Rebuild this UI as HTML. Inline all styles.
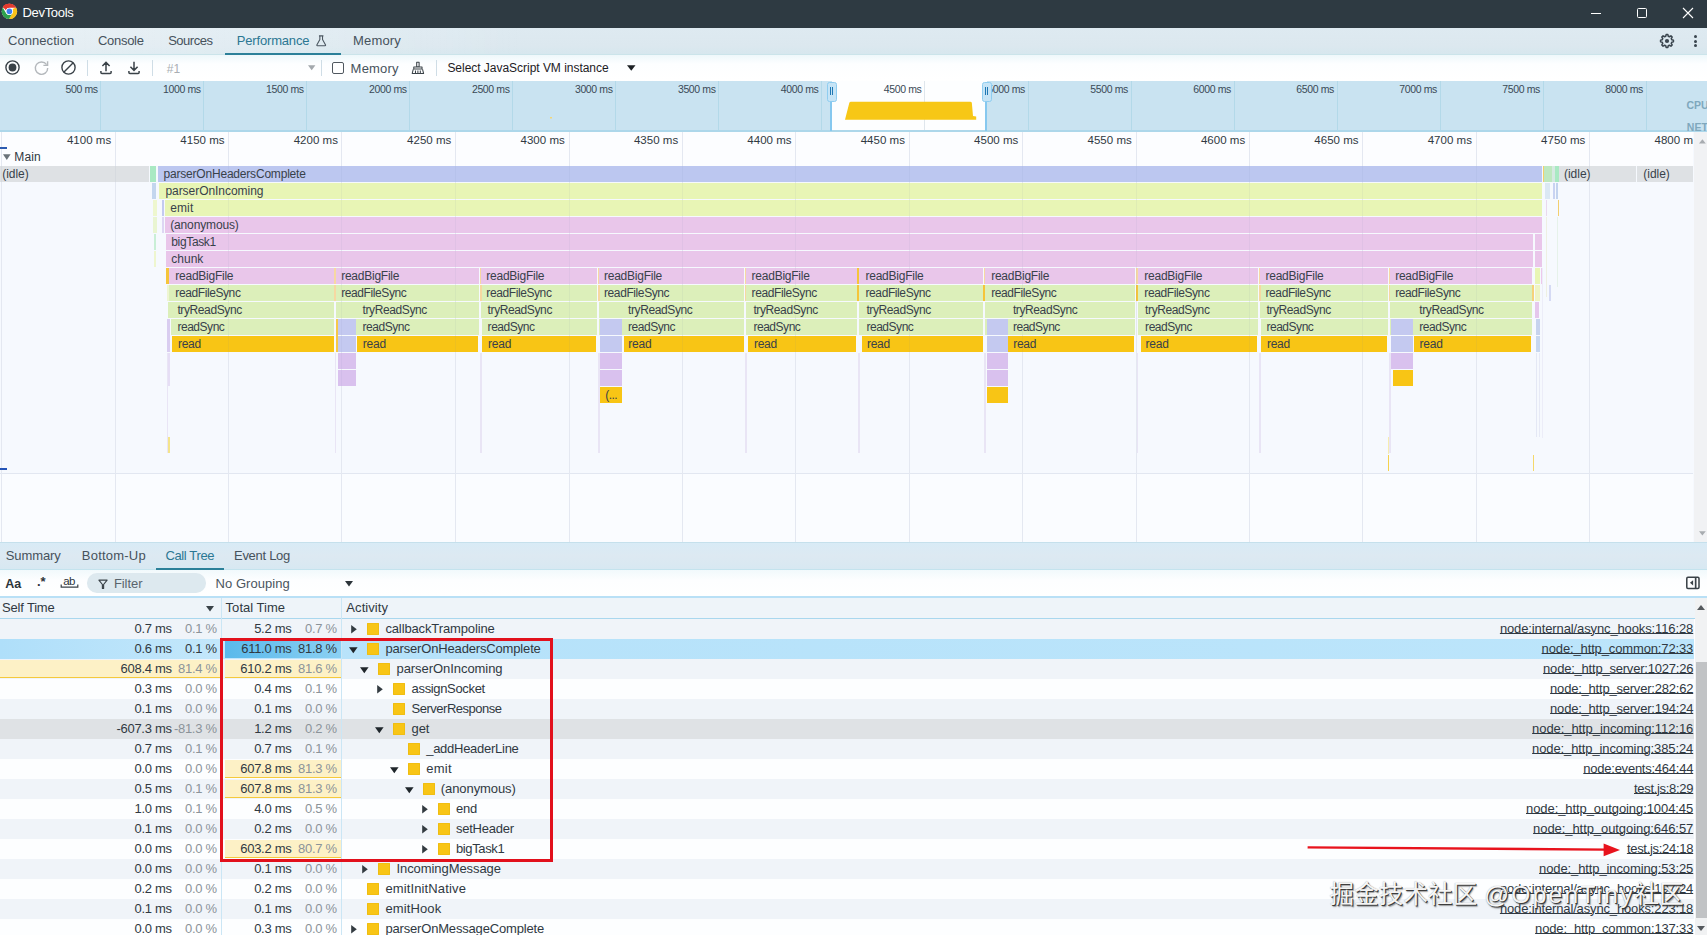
<!DOCTYPE html>
<html lang="en"><head><meta charset="utf-8"><title>DevTools</title>
<style>

html,body{margin:0;padding:0;}
body{width:1707px;height:935px;overflow:hidden;background:#f8fafe;font-family:"Liberation Sans","Noto Sans CJK SC",sans-serif;}
#app{position:relative;width:1707px;height:935px;overflow:hidden;}
.t{position:absolute;white-space:nowrap;line-height:16px;height:16px;}
.r{position:absolute;}
svg{position:absolute;overflow:visible;}
span.lk{position:absolute;white-space:nowrap;line-height:16px;height:16px;color:#303942;text-decoration:underline;text-decoration-thickness:1px;text-underline-offset:0.4px;}
</style></head>
<body>
<div id="app">
<div class="r" style="left:0.00px;top:0.00px;width:1707.00px;height:27.60px;background:#2e3a42;"></div>
<svg style="left:0.6px;top:3.2px" width="16.8" height="16.8" viewBox="0 0 48 48">
<circle cx="24" cy="24" r="22" fill="#fff"/>
<path d="M24 2a22 22 0 0 1 19.05 11H24a11 11 0 0 0-10.4 7.4L6 8.6A22 22 0 0 1 24 2z" fill="#e33b2e"/>
<path d="M43.05 13A22 22 0 0 1 23 46l9.5-16.5A11 11 0 0 0 33 17z" fill="#f9c11a" transform="rotate(0 24 24)"/>
<path d="M4.95 13A22 22 0 0 0 23 46l9.52-16.5a11 11 0 0 1-18.04 0z" fill="#2ea24c"/>
<path d="M24 2a22 22 0 0 1 19.05 11H24a11 11 0 0 0-9.53 5.5L4.95 13A22 22 0 0 1 24 2z" fill="#e33b2e"/>
<circle cx="24" cy="24" r="10" fill="#fff"/>
<circle cx="24" cy="24" r="8" fill="#3b7ff0"/>
</svg>
<div class="t" style="left:22.50px;top:4.60px;font-size:13px;color:#ffffff;letter-spacing:-0.321px;">DevTools</div>
<div class="r" style="left:1590.80px;top:13.00px;width:10.40px;height:1.00px;background:#ffffff;"></div>
<div class="r" style="left:1637px;top:8.2px;width:7.8px;height:7.8px;border:1px solid #fff;border-radius:1.5px;"></div>
<svg style="left:1683px;top:8.2px" width="10" height="10" viewBox="0 0 10 10"><path d="M0 0L10 10M10 0L0 10" stroke="#fff" stroke-width="1.1" fill="none"/></svg>
<div class="r" style="left:0;top:27.6px;width:1707px;height:27.4px;background:linear-gradient(90deg,rgba(255,255,255,0.32),rgba(255,255,255,0) 520px),linear-gradient(#deeaf1,#dce8ef 65%,#d6e7ee);"></div>
<div class="r" style="left:0.00px;top:54.20px;width:1707.00px;height:0.80px;background:#cbe4ea;"></div>
<div class="t" style="left:8.00px;top:32.50px;font-size:13px;color:#46525c;letter-spacing:0.053px;">Connection</div>
<div class="t" style="left:98.00px;top:32.50px;font-size:13px;color:#46525c;letter-spacing:-0.300px;">Console</div>
<div class="t" style="left:168.20px;top:32.50px;font-size:13px;color:#46525c;letter-spacing:-0.499px;">Sources</div>
<div class="t" style="left:236.80px;top:32.50px;font-size:13px;color:#2b7793;letter-spacing:-0.175px;">Performance</div>
<div class="t" style="left:353.00px;top:32.50px;font-size:13px;color:#46525c;letter-spacing:0.175px;">Memory</div>
<div class="r" style="left:225.00px;top:53.00px;width:116.00px;height:2.00px;background:#2c8099;"></div>
<svg style="left:314.8px;top:35.1px" width="12.4" height="11.6" viewBox="0 0 13 13"><path d="M4 1h5M5 1v4L1.6 11.2a.6.6 0 0 0 .5.8h8.8a.6.6 0 0 0 .5-.8L8 5V1" fill="none" stroke="#4a5660" stroke-width="1.2" stroke-linejoin="round"/></svg>
<svg style="left:1660px;top:33.7px" width="14" height="14" viewBox="0 0 14 14"><path d="M5.74 2.26 L6.13 0.56 L7.87 0.56 L8.26 2.26 L9.46 2.76 L10.94 1.83 L12.17 3.06 L11.24 4.54 L11.74 5.74 L13.44 6.13 L13.44 7.87 L11.74 8.26 L11.24 9.46 L12.17 10.94 L10.94 12.17 L9.46 11.24 L8.26 11.74 L7.87 13.44 L6.13 13.44 L5.74 11.74 L4.54 11.24 L3.06 12.17 L1.83 10.94 L2.76 9.46 L2.26 8.26 L0.56 7.87 L0.56 6.13 L2.26 5.74 L2.76 4.54 L1.83 3.06 L3.06 1.83 L4.54 2.76Z" fill="none" stroke="#3a454e" stroke-width="1.5" stroke-linejoin="round"/><circle cx="7" cy="7" r="2.1" fill="#3a454e"/></svg>
<div class="r" style="left:1693.5px;top:35.1px;width:3px;height:3px;border-radius:50%;background:#3a454e;"></div>
<div class="r" style="left:1693.5px;top:39.7px;width:3px;height:3px;border-radius:50%;background:#3a454e;"></div>
<div class="r" style="left:1693.5px;top:44.2px;width:3px;height:3px;border-radius:50%;background:#3a454e;"></div>
<div class="r" style="left:0;top:55px;width:1707px;height:26px;background:linear-gradient(#eef8fb,#fdfeff 35%,#ffffff);"></div>
<svg style="left:5px;top:60px" width="15" height="15" viewBox="0 0 15 15"><circle cx="7.5" cy="7.5" r="6.6" fill="none" stroke="#3a4248" stroke-width="1.4"/><circle cx="7.5" cy="7.5" r="3.9" fill="#3a4248"/></svg>
<svg style="left:33.6px;top:59.7px" width="15" height="15" viewBox="0 0 15 15"><path d="M12.6 4.6A6.2 6.2 0 1 0 13.7 8" fill="none" stroke="#b4b8bc" stroke-width="1.4"/><path d="M13.6 1.2v4.2H9.4" fill="none" stroke="#b4b8bc" stroke-width="1.4"/></svg>
<svg style="left:60.9px;top:60px" width="15" height="15" viewBox="0 0 15 15"><circle cx="7.5" cy="7.5" r="6.6" fill="none" stroke="#3a4248" stroke-width="1.4"/><path d="M12.2 2.8L2.8 12.2" stroke="#3a4248" stroke-width="1.4"/></svg>
<div class="r" style="left:87.30px;top:60.00px;width:1.00px;height:15.50px;background:#cfdde6;"></div>
<svg style="left:100px;top:60.6px" width="12" height="14" viewBox="0 0 12 14"><path d="M6 10.2V1.6M2.4 5L6 1.4l3.6 3.6M0.9 10v1.6q0 1 1 1h8.2q1 0 1-1V10" fill="none" stroke="#3a4248" stroke-width="1.5"/></svg>
<svg style="left:128px;top:60.6px" width="12" height="14" viewBox="0 0 12 14"><path d="M6 0.8v8.4M2.4 5.8L6 9.4l3.6-3.6M0.9 10v1.6q0 1 1 1h8.2q1 0 1-1V10" fill="none" stroke="#3a4248" stroke-width="1.5"/></svg>
<div class="r" style="left:151.80px;top:60.00px;width:1.00px;height:15.50px;background:#cfdde6;"></div>
<div class="t" style="left:166.70px;top:60.50px;font-size:12px;color:#a9aeb3;letter-spacing:0.076px;">#1</div>
<svg style="left:308.2px;top:65.2px" width="7.4" height="5.4" viewBox="0 0 9 6"><path d="M0 0h9L4.5 6z" fill="#a3a8ad"/></svg>
<div class="r" style="left:320.90px;top:60.00px;width:1.00px;height:15.50px;background:#cfdde6;"></div>
<div class="r" style="left:436.00px;top:60.00px;width:1.00px;height:15.50px;background:#cfdde6;"></div>
<div class="r" style="left:332px;top:61.8px;width:10.2px;height:10.2px;border:1px solid #50585f;border-radius:2px;background:#fff;"></div>
<div class="t" style="left:350.60px;top:61.20px;font-size:13px;color:#46525c;letter-spacing:0.208px;">Memory</div>
<svg style="left:411.2px;top:61px" width="13.8" height="13.6" viewBox="0 0 16 15"><path d="M6.6 1h2.8v5.4H6.6zM3.2 6.6h9.6v2.4H3.2zM2.6 9.4L1.4 14h13.2l-1.2-4.6M5.2 10.6v3.2M8 10.6v3.2M10.8 10.6v3.2" fill="none" stroke="#3a4248" stroke-width="1.2" stroke-linejoin="round"/></svg>
<div class="t" style="left:447.40px;top:59.50px;font-size:12px;color:#1c2024;letter-spacing:-0.030px;">Select JavaScript VM instance</div>
<svg style="left:626.5px;top:65px" width="8.5" height="6" viewBox="0 0 9 6"><path d="M0 0h9L4.5 6z" fill="#1c2024"/></svg>
<div class="r" style="left:0.00px;top:81.00px;width:1707.00px;height:50.70px;background:#c9e3f1;"></div>
<div class="r" style="left:0.00px;top:130.10px;width:1707.00px;height:1.60px;background:#add7ea;"></div>
<div class="r" style="left:832.00px;top:81.30px;width:154.50px;height:48.80px;background:#fdfeff;"></div>
<div class="r" style="left:100.30px;top:81.30px;width:1.00px;height:48.60px;background:#b3d9e9;"></div>
<div class="t" style="left:65.50px;top:81.20px;font-size:10.5px;color:#3a4a56;letter-spacing:-0.373px;">500 ms</div>
<div class="r" style="left:203.30px;top:81.30px;width:1.00px;height:48.60px;background:#b3d9e9;"></div>
<div class="t" style="left:163.04px;top:81.20px;font-size:10.5px;color:#3a4a56;letter-spacing:-0.374px;">1000 ms</div>
<div class="r" style="left:306.30px;top:81.30px;width:1.00px;height:48.60px;background:#b3d9e9;"></div>
<div class="t" style="left:266.04px;top:81.20px;font-size:10.5px;color:#3a4a56;letter-spacing:-0.374px;">1500 ms</div>
<div class="r" style="left:409.30px;top:81.30px;width:1.00px;height:48.60px;background:#b3d9e9;"></div>
<div class="t" style="left:369.04px;top:81.20px;font-size:10.5px;color:#3a4a56;letter-spacing:-0.374px;">2000 ms</div>
<div class="r" style="left:512.20px;top:81.30px;width:1.00px;height:48.60px;background:#b3d9e9;"></div>
<div class="t" style="left:471.94px;top:81.20px;font-size:10.5px;color:#3a4a56;letter-spacing:-0.374px;">2500 ms</div>
<div class="r" style="left:615.20px;top:81.30px;width:1.00px;height:48.60px;background:#b3d9e9;"></div>
<div class="t" style="left:574.94px;top:81.20px;font-size:10.5px;color:#3a4a56;letter-spacing:-0.374px;">3000 ms</div>
<div class="r" style="left:718.20px;top:81.30px;width:1.00px;height:48.60px;background:#b3d9e9;"></div>
<div class="t" style="left:677.94px;top:81.20px;font-size:10.5px;color:#3a4a56;letter-spacing:-0.374px;">3500 ms</div>
<div class="r" style="left:821.10px;top:81.30px;width:1.00px;height:48.60px;background:#b3d9e9;"></div>
<div class="t" style="left:780.84px;top:81.20px;font-size:10.5px;color:#3a4a56;letter-spacing:-0.374px;">4000 ms</div>
<div class="r" style="left:924.00px;top:81.30px;width:1.00px;height:48.60px;background:#dfe6ec;"></div>
<div class="t" style="left:883.74px;top:81.20px;font-size:10.5px;color:#3a4a56;letter-spacing:-0.374px;">4500 ms</div>
<div class="r" style="left:1027.50px;top:81.30px;width:1.00px;height:48.60px;background:#b3d9e9;"></div>
<div class="r" style="left:1130.50px;top:81.30px;width:1.00px;height:48.60px;background:#b3d9e9;"></div>
<div class="t" style="left:1090.24px;top:81.20px;font-size:10.5px;color:#3a4a56;letter-spacing:-0.374px;">5500 ms</div>
<div class="r" style="left:1233.50px;top:81.30px;width:1.00px;height:48.60px;background:#b3d9e9;"></div>
<div class="t" style="left:1193.24px;top:81.20px;font-size:10.5px;color:#3a4a56;letter-spacing:-0.374px;">6000 ms</div>
<div class="r" style="left:1336.50px;top:81.30px;width:1.00px;height:48.60px;background:#b3d9e9;"></div>
<div class="t" style="left:1296.24px;top:81.20px;font-size:10.5px;color:#3a4a56;letter-spacing:-0.374px;">6500 ms</div>
<div class="r" style="left:1439.50px;top:81.30px;width:1.00px;height:48.60px;background:#b3d9e9;"></div>
<div class="t" style="left:1399.24px;top:81.20px;font-size:10.5px;color:#3a4a56;letter-spacing:-0.374px;">7000 ms</div>
<div class="r" style="left:1542.50px;top:81.30px;width:1.00px;height:48.60px;background:#b3d9e9;"></div>
<div class="t" style="left:1502.24px;top:81.20px;font-size:10.5px;color:#3a4a56;letter-spacing:-0.374px;">7500 ms</div>
<div class="r" style="left:1645.50px;top:81.30px;width:1.00px;height:48.60px;background:#b3d9e9;"></div>
<div class="t" style="left:1605.24px;top:81.20px;font-size:10.5px;color:#3a4a56;letter-spacing:-0.374px;">8000 ms</div>
<div class="r" style="left:991px;top:81.3px;width:40px;height:16px;overflow:hidden;">
<div class="t" style="left:-3.76px;top:-0.10px;font-size:10.5px;color:#3a4a56;letter-spacing:-0.374px;">5000 ms</div>
</div>
<svg style="left:0;top:81px" width="1707" height="50" viewBox="0 0 1707 50"><path d="M845 38.8L849.4 21.6 850.6 20.8H970.6L971.8 21.6 973 35 976.2 35.6V38.8z" fill="#f7c716"/><rect x="550" y="36" width="2" height="1.5" fill="#f3d77a"/></svg>
<div class="t" style="left:1686.50px;top:96.70px;font-size:10.5px;color:#7fa8bd;font-weight:bold;">CPU</div>
<div class="t" style="left:1686.80px;top:119.30px;font-size:10.5px;color:#7fa8bd;font-weight:bold;">NET</div>
<div class="r" style="left:830.20px;top:99.00px;width:2.20px;height:32.00px;background:#86c8ef;"></div>
<div class="r" style="left:826.9px;top:82.3px;width:7.8px;height:17.4px;border:1px solid #8fcdf0;border-radius:2.5px;background:#c6e4f6;"></div>
<div class="r" style="left:829.60px;top:86.80px;width:1.00px;height:8.40px;background:#1f78b4;"></div>
<div class="r" style="left:832.00px;top:86.80px;width:1.00px;height:8.40px;background:#1f78b4;"></div>
<div class="r" style="left:985.10px;top:99.00px;width:2.20px;height:32.00px;background:#86c8ef;"></div>
<div class="r" style="left:981.8px;top:82.3px;width:7.8px;height:17.4px;border:1px solid #8fcdf0;border-radius:2.5px;background:#c6e4f6;"></div>
<div class="r" style="left:984.50px;top:86.80px;width:1.00px;height:8.40px;background:#1f78b4;"></div>
<div class="r" style="left:986.90px;top:86.80px;width:1.00px;height:8.40px;background:#1f78b4;"></div>
<div class="r" style="left:0.00px;top:131.70px;width:1707.00px;height:410.50px;background:#f6f9fe;"></div>
<div class="r" style="left:0.00px;top:131.70px;width:1693.00px;height:33.90px;background:#fcfdff;"></div>
<div class="r" style="left:0.00px;top:473.60px;width:1693.00px;height:68.40px;background:#fafcff;"></div>
<div class="r" style="left:0.00px;top:473.00px;width:1693.00px;height:1.00px;background:#e2e7f1;"></div>
<div class="t" style="left:66.90px;top:132.00px;font-size:11.5px;color:#303942;letter-spacing:0.027px;">4100 ms</div>
<div class="t" style="left:180.30px;top:132.00px;font-size:11.5px;color:#303942;letter-spacing:0.027px;">4150 ms</div>
<div class="t" style="left:293.70px;top:132.00px;font-size:11.5px;color:#303942;letter-spacing:0.027px;">4200 ms</div>
<div class="t" style="left:407.10px;top:132.00px;font-size:11.5px;color:#303942;letter-spacing:0.027px;">4250 ms</div>
<div class="t" style="left:520.50px;top:132.00px;font-size:11.5px;color:#303942;letter-spacing:0.027px;">4300 ms</div>
<div class="t" style="left:633.90px;top:132.00px;font-size:11.5px;color:#303942;letter-spacing:0.027px;">4350 ms</div>
<div class="t" style="left:747.30px;top:132.00px;font-size:11.5px;color:#303942;letter-spacing:0.027px;">4400 ms</div>
<div class="t" style="left:860.70px;top:132.00px;font-size:11.5px;color:#303942;letter-spacing:0.027px;">4450 ms</div>
<div class="t" style="left:974.10px;top:132.00px;font-size:11.5px;color:#303942;letter-spacing:0.027px;">4500 ms</div>
<div class="t" style="left:1087.50px;top:132.00px;font-size:11.5px;color:#303942;letter-spacing:0.027px;">4550 ms</div>
<div class="t" style="left:1200.90px;top:132.00px;font-size:11.5px;color:#303942;letter-spacing:0.027px;">4600 ms</div>
<div class="t" style="left:1314.30px;top:132.00px;font-size:11.5px;color:#303942;letter-spacing:0.027px;">4650 ms</div>
<div class="t" style="left:1427.70px;top:132.00px;font-size:11.5px;color:#303942;letter-spacing:0.027px;">4700 ms</div>
<div class="t" style="left:1541.10px;top:132.00px;font-size:11.5px;color:#303942;letter-spacing:0.027px;">4750 ms</div>
<div class="r" style="left:1640px;top:131px;width:52.6px;height:17px;overflow:hidden;">
<div class="t" style="left:14.50px;top:1.00px;font-size:11.5px;color:#303942;letter-spacing:0.027px;">4800 ms</div>
</div>
<div class="r" style="left:0.70px;top:131.70px;width:1.00px;height:410.30px;background:#edf0f7;"></div>
<div class="r" style="left:115.00px;top:131.70px;width:1.00px;height:410.30px;background:#edf0f7;"></div>
<div class="r" style="left:228.40px;top:131.70px;width:1.00px;height:410.30px;background:#edf0f7;"></div>
<div class="r" style="left:341.10px;top:131.70px;width:1.00px;height:410.30px;background:#edf0f7;"></div>
<div class="r" style="left:455.20px;top:131.70px;width:1.00px;height:410.30px;background:#edf0f7;"></div>
<div class="r" style="left:568.60px;top:131.70px;width:1.00px;height:410.30px;background:#edf0f7;"></div>
<div class="r" style="left:682.00px;top:131.70px;width:1.00px;height:410.30px;background:#edf0f7;"></div>
<div class="r" style="left:795.40px;top:131.70px;width:1.00px;height:410.30px;background:#edf0f7;"></div>
<div class="r" style="left:908.80px;top:131.70px;width:1.00px;height:410.30px;background:#edf0f7;"></div>
<div class="r" style="left:1022.20px;top:131.70px;width:1.00px;height:410.30px;background:#edf0f7;"></div>
<div class="r" style="left:1135.60px;top:131.70px;width:1.00px;height:410.30px;background:#edf0f7;"></div>
<div class="r" style="left:1249.00px;top:131.70px;width:1.00px;height:410.30px;background:#edf0f7;"></div>
<div class="r" style="left:1362.40px;top:131.70px;width:1.00px;height:410.30px;background:#edf0f7;"></div>
<div class="r" style="left:1475.80px;top:131.70px;width:1.00px;height:410.30px;background:#edf0f7;"></div>
<div class="r" style="left:1589.20px;top:131.70px;width:1.00px;height:410.30px;background:#edf0f7;"></div>
<div class="r" style="left:1693.80px;top:131.70px;width:13.20px;height:410.30px;background:#f1f2f4;"></div>
<svg style="left:1698.8px;top:138.8px" width="6.8" height="4.6" viewBox="0 0 8 5"><path d="M0 5h8L4 0z" fill="#a8acb0"/></svg>
<svg style="left:1698.8px;top:531px" width="6.8" height="4.6" viewBox="0 0 8 5"><path d="M0 0h8L4 5z" fill="#a8acb0"/></svg>
<div class="r" style="left:0.00px;top:146.50px;width:7.00px;height:2.00px;background:#2c5bb0;"></div>
<div class="r" style="left:0.00px;top:468.00px;width:7.00px;height:2.00px;background:#2453b6;"></div>
<svg style="left:3px;top:153.6px" width="7.6" height="6.2" viewBox="0 0 9 7"><path d="M0 0h9L4.5 7z" fill="#6b7379"/></svg>
<div class="t" style="left:14.30px;top:149.00px;font-size:12px;color:#303942;letter-spacing:0.097px;">Main</div>
<div class="r" style="left:0.00px;top:166.00px;width:148.50px;height:16.00px;background:#dee1e4;"></div>
<div class="t" style="left:2.20px;top:166.30px;font-size:12px;color:#38414a;letter-spacing:-0.029px;">(idle)</div>
<div class="r" style="left:150.00px;top:166.00px;width:6.20px;height:16.00px;background:#a9e9c3;"></div>
<div class="r" style="left:158.20px;top:166.00px;width:1383.80px;height:16.00px;background:#bcc7f0;"></div>
<div class="t" style="left:163.50px;top:166.30px;font-size:12px;color:#38414a;letter-spacing:-0.197px;">parserOnHeadersComplete</div>
<div class="r" style="left:1542.60px;top:166.00px;width:1.60px;height:16.00px;background:#f5cf6a;"></div>
<div class="r" style="left:1544.20px;top:166.00px;width:7.80px;height:16.00px;background:#bfe8c0;"></div>
<div class="r" style="left:1552.00px;top:166.00px;width:3.00px;height:16.00px;background:#d6e9e2;"></div>
<div class="r" style="left:1555.00px;top:166.00px;width:4.00px;height:16.00px;background:#a9e9c3;"></div>
<div class="r" style="left:1559.00px;top:166.00px;width:77.00px;height:16.00px;background:#dee1e4;"></div>
<div class="t" style="left:1564.00px;top:166.30px;font-size:12px;color:#38414a;letter-spacing:-0.029px;">(idle)</div>
<div class="r" style="left:1637.20px;top:166.00px;width:55.80px;height:16.00px;background:#dee1e4;"></div>
<div class="t" style="left:1643.30px;top:166.30px;font-size:12px;color:#38414a;letter-spacing:-0.029px;">(idle)</div>
<div class="r" style="left:152.00px;top:183.00px;width:3.60px;height:16.00px;background:#c3d6ee;"></div>
<div class="r" style="left:158.80px;top:183.00px;width:1383.20px;height:16.00px;background:#e8f5b5;"></div>
<div class="t" style="left:165.40px;top:183.30px;font-size:12px;color:#38414a;letter-spacing:-0.045px;">parserOnIncoming</div>
<div class="r" style="left:1545.00px;top:183.00px;width:4.50px;height:16.00px;background:#dbe8f4;"></div>
<div class="r" style="left:1553.00px;top:183.00px;width:1.50px;height:16.00px;background:#c9d3f2;"></div>
<div class="r" style="left:1555.50px;top:183.00px;width:2.50px;height:16.00px;background:#c3d3ee;"></div>
<div class="r" style="left:153.00px;top:200.00px;width:4.00px;height:16.00px;background:#eef7cf;"></div>
<div class="r" style="left:162.00px;top:200.00px;width:2.20px;height:16.00px;background:#c3caf0;"></div>
<div class="r" style="left:164.60px;top:200.00px;width:1377.40px;height:16.00px;background:#e8f5b5;"></div>
<div class="t" style="left:170.20px;top:200.30px;font-size:12px;color:#38414a;letter-spacing:0.132px;">emit</div>
<div class="r" style="left:1546.00px;top:200.00px;width:1.00px;height:16.00px;background:#e9d9ee;"></div>
<div class="r" style="left:1557.50px;top:200.00px;width:1.30px;height:16.00px;background:#f3cf6f;"></div>
<div class="r" style="left:153.00px;top:217.00px;width:4.00px;height:16.00px;background:#e9f5d2;"></div>
<div class="r" style="left:162.00px;top:217.00px;width:2.20px;height:16.00px;background:#ddd6f3;"></div>
<div class="r" style="left:164.60px;top:217.00px;width:1377.40px;height:16.00px;background:#e9c6ea;"></div>
<div class="t" style="left:170.20px;top:217.30px;font-size:12px;color:#38414a;letter-spacing:-0.139px;">(anonymous)</div>
<div class="r" style="left:1546.00px;top:217.00px;width:1.00px;height:16.00px;background:#f3e2f3;"></div>
<div class="r" style="left:153.50px;top:234.00px;width:2.00px;height:16.00px;background:#c9efd6;"></div>
<div class="r" style="left:166.00px;top:234.00px;width:1367.00px;height:16.00px;background:#e9c6ea;"></div>
<div class="t" style="left:171.30px;top:234.30px;font-size:12px;color:#38414a;letter-spacing:-0.358px;">bigTask1</div>
<div class="r" style="left:1534.50px;top:234.00px;width:7.50px;height:16.00px;background:#e9c6ea;"></div>
<div class="r" style="left:153.50px;top:251.00px;width:2.00px;height:16.00px;background:#eef6cf;"></div>
<div class="r" style="left:166.00px;top:251.00px;width:1367.00px;height:16.00px;background:#e9c6ea;"></div>
<div class="t" style="left:171.30px;top:251.30px;font-size:12px;color:#38414a;">chunk</div>
<div class="r" style="left:1534.50px;top:251.00px;width:7.50px;height:16.00px;background:#e9c6ea;"></div>
<div class="r" style="left:166.60px;top:353.00px;width:1.60px;height:100.00px;background:#e9e5f5;"></div>
<div class="r" style="left:166.00px;top:268.00px;width:167.70px;height:16.00px;background:#e9c6ea;"></div>
<div class="t" style="left:175.30px;top:268.30px;font-size:12px;color:#38414a;letter-spacing:-0.245px;">readBigFile</div>
<div class="r" style="left:166.00px;top:268.00px;width:3.00px;height:16.00px;background:#f5c53a;"></div>
<div class="r" style="left:167.40px;top:285.00px;width:166.30px;height:16.00px;background:#dcefba;"></div>
<div class="t" style="left:175.30px;top:285.30px;font-size:12px;color:#38414a;letter-spacing:-0.403px;">readFileSync</div>
<div class="r" style="left:167.40px;top:285.00px;width:1.80px;height:16.00px;background:#eef5d2;"></div>
<div class="r" style="left:167.50px;top:302.00px;width:166.20px;height:16.00px;background:#dcefba;"></div>
<div class="t" style="left:177.40px;top:302.30px;font-size:12px;color:#38414a;letter-spacing:-0.391px;">tryReadSync</div>
<div class="r" style="left:171.10px;top:319.00px;width:162.60px;height:16.00px;background:#dcefba;"></div>
<div class="t" style="left:177.40px;top:319.30px;font-size:12px;color:#38414a;letter-spacing:-0.462px;">readSync</div>
<div class="r" style="left:172.00px;top:336.00px;width:161.70px;height:16.00px;background:#f8c515;"></div>
<div class="t" style="left:177.90px;top:336.30px;font-size:12px;color:#38414a;letter-spacing:-0.255px;">read</div>
<div class="r" style="left:334.90px;top:353.00px;width:1.60px;height:100.00px;background:#e9e5f5;"></div>
<div class="r" style="left:334.30px;top:268.00px;width:144.30px;height:16.00px;background:#e9c6ea;"></div>
<div class="t" style="left:341.20px;top:268.30px;font-size:12px;color:#38414a;letter-spacing:-0.245px;">readBigFile</div>
<div class="r" style="left:334.30px;top:268.00px;width:1.70px;height:16.00px;background:#f6d8a2;"></div>
<div class="r" style="left:334.30px;top:285.00px;width:144.30px;height:16.00px;background:#dcefba;"></div>
<div class="t" style="left:341.20px;top:285.30px;font-size:12px;color:#38414a;letter-spacing:-0.403px;">readFileSync</div>
<div class="r" style="left:334.30px;top:285.00px;width:1.80px;height:16.00px;background:#f6d8a2;"></div>
<div class="r" style="left:335.80px;top:302.00px;width:142.80px;height:16.00px;background:#dcefba;"></div>
<div class="t" style="left:362.50px;top:302.30px;font-size:12px;color:#38414a;letter-spacing:-0.391px;">tryReadSync</div>
<div class="r" style="left:335.80px;top:319.00px;width:142.80px;height:16.00px;background:#dcefba;"></div>
<div class="t" style="left:362.50px;top:319.30px;font-size:12px;color:#38414a;letter-spacing:-0.462px;">readSync</div>
<div class="r" style="left:338.00px;top:319.00px;width:18.00px;height:16.00px;background:#c4c9f0;"></div>
<div class="r" style="left:338.00px;top:336.00px;width:18.00px;height:16.00px;background:#c4c9f0;"></div>
<div class="r" style="left:357.40px;top:336.00px;width:120.90px;height:16.00px;background:#f8c515;"></div>
<div class="t" style="left:362.80px;top:336.30px;font-size:12px;color:#38414a;letter-spacing:-0.255px;">read</div>
<div class="r" style="left:480.40px;top:353.00px;width:1.60px;height:100.00px;background:#e9e5f5;"></div>
<div class="r" style="left:479.80px;top:268.00px;width:117.00px;height:16.00px;background:#e9c6ea;"></div>
<div class="t" style="left:486.30px;top:268.30px;font-size:12px;color:#38414a;letter-spacing:-0.245px;">readBigFile</div>
<div class="r" style="left:479.80px;top:268.00px;width:1.70px;height:16.00px;background:#f6d8a2;"></div>
<div class="r" style="left:479.80px;top:285.00px;width:117.00px;height:16.00px;background:#dcefba;"></div>
<div class="t" style="left:486.30px;top:285.30px;font-size:12px;color:#38414a;letter-spacing:-0.403px;">readFileSync</div>
<div class="r" style="left:479.80px;top:285.00px;width:1.80px;height:16.00px;background:#f6d8a2;"></div>
<div class="r" style="left:481.30px;top:302.00px;width:115.50px;height:16.00px;background:#dcefba;"></div>
<div class="t" style="left:487.60px;top:302.30px;font-size:12px;color:#38414a;letter-spacing:-0.391px;">tryReadSync</div>
<div class="r" style="left:481.60px;top:319.00px;width:115.20px;height:16.00px;background:#dcefba;"></div>
<div class="t" style="left:487.60px;top:319.30px;font-size:12px;color:#38414a;letter-spacing:-0.462px;">readSync</div>
<div class="r" style="left:482.30px;top:336.00px;width:113.90px;height:16.00px;background:#f8c515;"></div>
<div class="t" style="left:488.10px;top:336.30px;font-size:12px;color:#38414a;letter-spacing:-0.255px;">read</div>
<div class="r" style="left:598.40px;top:353.00px;width:1.60px;height:100.00px;background:#e9e5f5;"></div>
<div class="r" style="left:597.80px;top:268.00px;width:145.90px;height:16.00px;background:#e9c6ea;"></div>
<div class="t" style="left:604.00px;top:268.30px;font-size:12px;color:#38414a;letter-spacing:-0.245px;">readBigFile</div>
<div class="r" style="left:597.80px;top:268.00px;width:1.70px;height:16.00px;background:#f6d8a2;"></div>
<div class="r" style="left:597.80px;top:285.00px;width:145.90px;height:16.00px;background:#dcefba;"></div>
<div class="t" style="left:604.00px;top:285.30px;font-size:12px;color:#38414a;letter-spacing:-0.403px;">readFileSync</div>
<div class="r" style="left:597.80px;top:285.00px;width:1.80px;height:16.00px;background:#f6d8a2;"></div>
<div class="r" style="left:599.30px;top:302.00px;width:144.40px;height:16.00px;background:#dcefba;"></div>
<div class="t" style="left:628.00px;top:302.30px;font-size:12px;color:#38414a;letter-spacing:-0.391px;">tryReadSync</div>
<div class="r" style="left:599.30px;top:319.00px;width:144.40px;height:16.00px;background:#dcefba;"></div>
<div class="t" style="left:628.00px;top:319.30px;font-size:12px;color:#38414a;letter-spacing:-0.462px;">readSync</div>
<div class="r" style="left:600.20px;top:319.00px;width:22.30px;height:16.00px;background:#c4c9f0;"></div>
<div class="r" style="left:600.20px;top:336.00px;width:22.30px;height:16.00px;background:#c4c9f0;"></div>
<div class="r" style="left:624.00px;top:336.00px;width:119.50px;height:16.00px;background:#f8c515;"></div>
<div class="t" style="left:628.30px;top:336.30px;font-size:12px;color:#38414a;letter-spacing:-0.255px;">read</div>
<div class="r" style="left:745.20px;top:353.00px;width:1.60px;height:100.00px;background:#e9e5f5;"></div>
<div class="r" style="left:744.60px;top:268.00px;width:112.50px;height:16.00px;background:#e9c6ea;"></div>
<div class="t" style="left:751.60px;top:268.30px;font-size:12px;color:#38414a;letter-spacing:-0.245px;">readBigFile</div>
<div class="r" style="left:744.60px;top:268.00px;width:1.70px;height:16.00px;background:#f6d8a2;"></div>
<div class="r" style="left:744.60px;top:285.00px;width:112.50px;height:16.00px;background:#dcefba;"></div>
<div class="t" style="left:751.60px;top:285.30px;font-size:12px;color:#38414a;letter-spacing:-0.403px;">readFileSync</div>
<div class="r" style="left:744.60px;top:285.00px;width:1.80px;height:16.00px;background:#f6d8a2;"></div>
<div class="r" style="left:746.10px;top:302.00px;width:111.00px;height:16.00px;background:#dcefba;"></div>
<div class="t" style="left:753.40px;top:302.30px;font-size:12px;color:#38414a;letter-spacing:-0.391px;">tryReadSync</div>
<div class="r" style="left:746.40px;top:319.00px;width:110.70px;height:16.00px;background:#dcefba;"></div>
<div class="t" style="left:753.40px;top:319.30px;font-size:12px;color:#38414a;letter-spacing:-0.462px;">readSync</div>
<div class="r" style="left:747.80px;top:336.00px;width:108.10px;height:16.00px;background:#f8c515;"></div>
<div class="t" style="left:753.90px;top:336.30px;font-size:12px;color:#38414a;letter-spacing:-0.255px;">read</div>
<div class="r" style="left:858.00px;top:353.00px;width:1.60px;height:100.00px;background:#e9e5f5;"></div>
<div class="r" style="left:857.40px;top:268.00px;width:125.70px;height:16.00px;background:#e9c6ea;"></div>
<div class="t" style="left:865.50px;top:268.30px;font-size:12px;color:#38414a;letter-spacing:-0.245px;">readBigFile</div>
<div class="r" style="left:857.40px;top:268.00px;width:1.70px;height:16.00px;background:#f5c53a;"></div>
<div class="r" style="left:857.40px;top:285.00px;width:125.70px;height:16.00px;background:#dcefba;"></div>
<div class="t" style="left:865.50px;top:285.30px;font-size:12px;color:#38414a;letter-spacing:-0.403px;">readFileSync</div>
<div class="r" style="left:857.00px;top:285.00px;width:1.80px;height:16.00px;background:#f5c53a;"></div>
<div class="r" style="left:858.90px;top:302.00px;width:124.20px;height:16.00px;background:#dcefba;"></div>
<div class="t" style="left:866.40px;top:302.30px;font-size:12px;color:#38414a;letter-spacing:-0.391px;">tryReadSync</div>
<div class="r" style="left:859.20px;top:319.00px;width:123.90px;height:16.00px;background:#dcefba;"></div>
<div class="t" style="left:866.40px;top:319.30px;font-size:12px;color:#38414a;letter-spacing:-0.462px;">readSync</div>
<div class="r" style="left:861.50px;top:336.00px;width:121.20px;height:16.00px;background:#f8c515;"></div>
<div class="t" style="left:866.90px;top:336.30px;font-size:12px;color:#38414a;letter-spacing:-0.255px;">read</div>
<div class="r" style="left:984.20px;top:353.00px;width:1.60px;height:100.00px;background:#e9e5f5;"></div>
<div class="r" style="left:983.60px;top:268.00px;width:151.90px;height:16.00px;background:#e9c6ea;"></div>
<div class="t" style="left:991.20px;top:268.30px;font-size:12px;color:#38414a;letter-spacing:-0.245px;">readBigFile</div>
<div class="r" style="left:983.60px;top:268.00px;width:1.70px;height:16.00px;background:#f6d8a2;"></div>
<div class="r" style="left:983.60px;top:285.00px;width:151.90px;height:16.00px;background:#dcefba;"></div>
<div class="t" style="left:991.20px;top:285.30px;font-size:12px;color:#38414a;letter-spacing:-0.403px;">readFileSync</div>
<div class="r" style="left:983.20px;top:285.00px;width:1.80px;height:16.00px;background:#f5c53a;"></div>
<div class="r" style="left:985.10px;top:302.00px;width:150.40px;height:16.00px;background:#dcefba;"></div>
<div class="t" style="left:1012.90px;top:302.30px;font-size:12px;color:#38414a;letter-spacing:-0.391px;">tryReadSync</div>
<div class="r" style="left:985.10px;top:319.00px;width:150.40px;height:16.00px;background:#dcefba;"></div>
<div class="t" style="left:1012.90px;top:319.30px;font-size:12px;color:#38414a;letter-spacing:-0.462px;">readSync</div>
<div class="r" style="left:987.10px;top:319.00px;width:20.60px;height:16.00px;background:#c4c9f0;"></div>
<div class="r" style="left:987.10px;top:336.00px;width:20.60px;height:16.00px;background:#c4c9f0;"></div>
<div class="r" style="left:1008.20px;top:336.00px;width:126.30px;height:16.00px;background:#f8c515;"></div>
<div class="t" style="left:1013.20px;top:336.30px;font-size:12px;color:#38414a;letter-spacing:-0.255px;">read</div>
<div class="r" style="left:1136.80px;top:353.00px;width:1.60px;height:100.00px;background:#e9e5f5;"></div>
<div class="r" style="left:1136.20px;top:268.00px;width:121.80px;height:16.00px;background:#e9c6ea;"></div>
<div class="t" style="left:1144.30px;top:268.30px;font-size:12px;color:#38414a;letter-spacing:-0.245px;">readBigFile</div>
<div class="r" style="left:1136.20px;top:268.00px;width:1.70px;height:16.00px;background:#f6d8a2;"></div>
<div class="r" style="left:1136.20px;top:285.00px;width:121.80px;height:16.00px;background:#dcefba;"></div>
<div class="t" style="left:1144.30px;top:285.30px;font-size:12px;color:#38414a;letter-spacing:-0.403px;">readFileSync</div>
<div class="r" style="left:1135.80px;top:285.00px;width:1.80px;height:16.00px;background:#f5c53a;"></div>
<div class="r" style="left:1137.70px;top:302.00px;width:120.30px;height:16.00px;background:#dcefba;"></div>
<div class="t" style="left:1145.10px;top:302.30px;font-size:12px;color:#38414a;letter-spacing:-0.391px;">tryReadSync</div>
<div class="r" style="left:1138.00px;top:319.00px;width:120.00px;height:16.00px;background:#dcefba;"></div>
<div class="t" style="left:1145.10px;top:319.30px;font-size:12px;color:#38414a;letter-spacing:-0.462px;">readSync</div>
<div class="r" style="left:1140.70px;top:336.00px;width:116.40px;height:16.00px;background:#f8c515;"></div>
<div class="t" style="left:1145.60px;top:336.30px;font-size:12px;color:#38414a;letter-spacing:-0.255px;">read</div>
<div class="r" style="left:1259.40px;top:353.00px;width:1.60px;height:100.00px;background:#e9e5f5;"></div>
<div class="r" style="left:1258.80px;top:268.00px;width:129.20px;height:16.00px;background:#e9c6ea;"></div>
<div class="t" style="left:1265.50px;top:268.30px;font-size:12px;color:#38414a;letter-spacing:-0.245px;">readBigFile</div>
<div class="r" style="left:1258.80px;top:268.00px;width:1.70px;height:16.00px;background:#f6d8a2;"></div>
<div class="r" style="left:1258.80px;top:285.00px;width:129.20px;height:16.00px;background:#dcefba;"></div>
<div class="t" style="left:1265.50px;top:285.30px;font-size:12px;color:#38414a;letter-spacing:-0.403px;">readFileSync</div>
<div class="r" style="left:1258.80px;top:285.00px;width:1.80px;height:16.00px;background:#f6d8a2;"></div>
<div class="r" style="left:1260.30px;top:302.00px;width:127.70px;height:16.00px;background:#dcefba;"></div>
<div class="t" style="left:1266.40px;top:302.30px;font-size:12px;color:#38414a;letter-spacing:-0.391px;">tryReadSync</div>
<div class="r" style="left:1260.60px;top:319.00px;width:127.40px;height:16.00px;background:#dcefba;"></div>
<div class="t" style="left:1266.40px;top:319.30px;font-size:12px;color:#38414a;letter-spacing:-0.462px;">readSync</div>
<div class="r" style="left:1261.10px;top:336.00px;width:126.40px;height:16.00px;background:#f8c515;"></div>
<div class="t" style="left:1266.90px;top:336.30px;font-size:12px;color:#38414a;letter-spacing:-0.255px;">read</div>
<div class="r" style="left:1389.10px;top:353.00px;width:1.60px;height:100.00px;background:#e9e5f5;"></div>
<div class="r" style="left:1388.50px;top:268.00px;width:143.90px;height:16.00px;background:#e9c6ea;"></div>
<div class="t" style="left:1395.20px;top:268.30px;font-size:12px;color:#38414a;letter-spacing:-0.245px;">readBigFile</div>
<div class="r" style="left:1388.50px;top:268.00px;width:1.70px;height:16.00px;background:#f6d8a2;"></div>
<div class="r" style="left:1388.50px;top:285.00px;width:143.90px;height:16.00px;background:#dcefba;"></div>
<div class="t" style="left:1395.20px;top:285.30px;font-size:12px;color:#38414a;letter-spacing:-0.403px;">readFileSync</div>
<div class="r" style="left:1388.50px;top:285.00px;width:1.80px;height:16.00px;background:#f6d8a2;"></div>
<div class="r" style="left:1390.00px;top:302.00px;width:142.40px;height:16.00px;background:#dcefba;"></div>
<div class="t" style="left:1419.30px;top:302.30px;font-size:12px;color:#38414a;letter-spacing:-0.391px;">tryReadSync</div>
<div class="r" style="left:1390.00px;top:319.00px;width:142.40px;height:16.00px;background:#dcefba;"></div>
<div class="t" style="left:1419.30px;top:319.30px;font-size:12px;color:#38414a;letter-spacing:-0.462px;">readSync</div>
<div class="r" style="left:1391.20px;top:319.00px;width:21.90px;height:16.00px;background:#c4c9f0;"></div>
<div class="r" style="left:1391.20px;top:336.00px;width:21.90px;height:16.00px;background:#c4c9f0;"></div>
<div class="r" style="left:1414.00px;top:336.00px;width:117.40px;height:16.00px;background:#f8c515;"></div>
<div class="t" style="left:1419.60px;top:336.30px;font-size:12px;color:#38414a;letter-spacing:-0.255px;">read</div>
<div class="r" style="left:168.40px;top:437.00px;width:1.30px;height:16.00px;background:#f4e48c;"></div>
<div class="r" style="left:338.00px;top:353.00px;width:18.00px;height:16.00px;background:#d9c1ee;"></div>
<div class="r" style="left:338.00px;top:370.00px;width:18.00px;height:16.00px;background:#d9c1ee;"></div>
<div class="r" style="left:600.20px;top:353.00px;width:22.30px;height:16.00px;background:#d9c1ee;"></div>
<div class="r" style="left:600.20px;top:370.00px;width:22.30px;height:16.00px;background:#d9c1ee;"></div>
<div class="r" style="left:600.20px;top:387.00px;width:22.30px;height:16.00px;background:#f8c515;"></div>
<div class="t" style="left:605.30px;top:387.30px;font-size:12px;color:#38414a;letter-spacing:-0.549px;">(...</div>
<div class="r" style="left:987.10px;top:353.00px;width:20.60px;height:16.00px;background:#d9c1ee;"></div>
<div class="r" style="left:987.10px;top:370.00px;width:20.60px;height:16.00px;background:#d9c1ee;"></div>
<div class="r" style="left:987.10px;top:387.00px;width:20.60px;height:16.00px;background:#f8c515;"></div>
<div class="r" style="left:1391.20px;top:353.00px;width:21.90px;height:16.00px;background:#d9c1ee;"></div>
<div class="r" style="left:1393.00px;top:370.00px;width:20.10px;height:16.00px;background:#f8c515;"></div>
<div class="r" style="left:167.30px;top:319.00px;width:3.20px;height:33.00px;background:#d9cdf0;"></div>
<div class="r" style="left:167.60px;top:353.00px;width:2.60px;height:33.00px;background:#e6def5;"></div>
<div class="r" style="left:1534.50px;top:268.00px;width:5.30px;height:16.00px;background:#e8f5b5;"></div>
<div class="r" style="left:1540.50px;top:268.00px;width:1.50px;height:16.00px;background:#edc9ec;"></div>
<div class="r" style="left:1534.50px;top:285.00px;width:5.30px;height:16.00px;background:#eef4c4;"></div>
<div class="r" style="left:1532.40px;top:285.00px;width:1.20px;height:16.00px;background:#f5d27a;"></div>
<div class="r" style="left:1534.50px;top:302.00px;width:4.50px;height:16.00px;background:#e5c7ec;"></div>
<div class="r" style="left:1535.50px;top:319.00px;width:4.00px;height:16.00px;background:#c7d3ee;"></div>
<div class="r" style="left:1535.50px;top:336.00px;width:4.00px;height:16.00px;background:#c7d7f0;"></div>
<div class="r" style="left:1536.00px;top:353.00px;width:1.20px;height:84.00px;background:#e4e8f5;"></div>
<div class="r" style="left:1538.50px;top:353.00px;width:1.20px;height:84.00px;background:#e7eaf6;"></div>
<div class="r" style="left:1541.50px;top:268.00px;width:1.00px;height:170.00px;background:#ecedf8;"></div>
<div class="r" style="left:1388.20px;top:437.00px;width:1.20px;height:17.00px;background:#f6ecb0;"></div>
<div class="r" style="left:1388.20px;top:455.00px;width:1.20px;height:16.00px;background:#f5d24e;"></div>
<div class="r" style="left:1533.20px;top:455.00px;width:1.20px;height:16.00px;background:#f5d86a;"></div>
<div class="r" style="left:1549.00px;top:285.00px;width:2.00px;height:16.00px;background:#d5daf4;"></div>
<div class="r" style="left:1546.00px;top:217.00px;width:1.00px;height:80.00px;background:#eef0e2;"></div>
<div class="r" style="left:1557.00px;top:217.00px;width:1.00px;height:70.00px;background:#e6f2ea;"></div>
<div class="r" style="left:0.70px;top:131.70px;width:1.00px;height:410.30px;background:rgba(110,122,170,0.07);"></div>
<div class="r" style="left:115.00px;top:131.70px;width:1.00px;height:410.30px;background:rgba(110,122,170,0.07);"></div>
<div class="r" style="left:228.40px;top:131.70px;width:1.00px;height:410.30px;background:rgba(110,122,170,0.07);"></div>
<div class="r" style="left:341.10px;top:131.70px;width:1.00px;height:410.30px;background:rgba(110,122,170,0.07);"></div>
<div class="r" style="left:455.20px;top:131.70px;width:1.00px;height:410.30px;background:rgba(110,122,170,0.07);"></div>
<div class="r" style="left:568.60px;top:131.70px;width:1.00px;height:410.30px;background:rgba(110,122,170,0.07);"></div>
<div class="r" style="left:682.00px;top:131.70px;width:1.00px;height:410.30px;background:rgba(110,122,170,0.07);"></div>
<div class="r" style="left:795.40px;top:131.70px;width:1.00px;height:410.30px;background:rgba(110,122,170,0.07);"></div>
<div class="r" style="left:908.80px;top:131.70px;width:1.00px;height:410.30px;background:rgba(110,122,170,0.07);"></div>
<div class="r" style="left:1022.20px;top:131.70px;width:1.00px;height:410.30px;background:rgba(110,122,170,0.07);"></div>
<div class="r" style="left:1135.60px;top:131.70px;width:1.00px;height:410.30px;background:rgba(110,122,170,0.07);"></div>
<div class="r" style="left:1249.00px;top:131.70px;width:1.00px;height:410.30px;background:rgba(110,122,170,0.07);"></div>
<div class="r" style="left:1362.40px;top:131.70px;width:1.00px;height:410.30px;background:rgba(110,122,170,0.07);"></div>
<div class="r" style="left:1475.80px;top:131.70px;width:1.00px;height:410.30px;background:rgba(110,122,170,0.07);"></div>
<div class="r" style="left:1589.20px;top:131.70px;width:1.00px;height:410.30px;background:rgba(110,122,170,0.07);"></div>
<div class="r" style="left:336.30px;top:319.00px;width:1.70px;height:33.00px;background:#f5c94a;"></div>
<div class="r" style="left:0;top:542px;width:1707px;height:28px;background:linear-gradient(#d8ebf6,#dde9f2 50%,#d7e8f2);"></div>
<div class="r" style="left:0.00px;top:542.00px;width:1707.00px;height:1.00px;background:#c5e0ec;"></div>
<div class="r" style="left:0.00px;top:569.30px;width:1707.00px;height:0.80px;background:#c4e3ee;"></div>
<div class="t" style="left:5.80px;top:547.50px;font-size:13px;color:#46525c;letter-spacing:-0.117px;">Summary</div>
<div class="t" style="left:81.80px;top:547.50px;font-size:13px;color:#46525c;letter-spacing:0.219px;">Bottom-Up</div>
<div class="t" style="left:165.50px;top:547.50px;font-size:13px;color:#2b7793;letter-spacing:-0.380px;">Call Tree</div>
<div class="t" style="left:234.00px;top:547.50px;font-size:13px;color:#46525c;letter-spacing:-0.283px;">Event Log</div>
<div class="r" style="left:156.00px;top:567.80px;width:68.00px;height:2.20px;background:#2c8099;"></div>
<div class="r" style="left:0;top:570px;width:1707px;height:26.4px;background:linear-gradient(#f1f9fc,#fdfeff 40%,#ffffff);"></div>
<div class="r" style="left:0.00px;top:596.20px;width:1707.00px;height:2.00px;background:#b9e0f6;"></div>
<div class="t" style="left:5.30px;top:575.60px;font-size:12.5px;color:#2c343a;letter-spacing:-0.190px;font-weight:bold;">Aa</div>
<div class="t" style="left:37.00px;top:574.20px;font-size:13px;color:#2c343a;letter-spacing:-0.085px;font-weight:bold;">.*</div>
<svg style="left:59.5px;top:575px" width="19" height="15" viewBox="0 0 19 15"><path d="M1.2 9.6v2.6h16.6V9.6" fill="none" stroke="#3a4248" stroke-width="1.2"/></svg>
<div class="t" style="left:63.20px;top:572.80px;font-size:11.5px;color:#2c343a;letter-spacing:-0.596px;">ab</div>
<div class="r" style="left:86.5px;top:573.3px;width:119.1px;height:19.7px;border-radius:9.85px;background:#dde9ef;"></div>
<svg style="left:97.5px;top:578.5px" width="10" height="10" viewBox="0 0 10 10"><path d="M0.9 1.1H9.1L5.6 5.5V9.5H4.4V5.5Z" fill="none" stroke="#3a4248" stroke-width="1.15" stroke-linejoin="round"/></svg>
<div class="t" style="left:113.90px;top:575.60px;font-size:13px;color:#59646d;letter-spacing:-0.048px;">Filter</div>
<div class="t" style="left:215.50px;top:575.60px;font-size:13px;color:#4a555e;letter-spacing:0.063px;">No Grouping</div>
<svg style="left:345px;top:581px" width="8" height="5.5" viewBox="0 0 9 6"><path d="M0 0h9L4.5 6z" fill="#2c343a"/></svg>
<svg style="left:1686px;top:576px" width="13.8" height="13.7" viewBox="0 0 14 13"><rect x="0.8" y="0.8" width="12.4" height="11.4" rx="1.2" fill="none" stroke="#3a4248" stroke-width="1.55"/><path d="M9.8 1v11" stroke="#3a4248" stroke-width="1.7"/><path d="M7.2 3.8v5.4L4 6.5z" fill="#3a4248"/></svg>
<div class="r" style="left:0.00px;top:598.20px;width:1707.00px;height:340.00px;background:#fdfeff;"></div>
<div class="r" style="left:0.00px;top:598.20px;width:1707.00px;height:19.60px;background:#eef4f9;"></div>
<div class="t" style="left:2.10px;top:600.20px;font-size:13px;color:#303942;letter-spacing:-0.198px;">Self Time</div>
<div class="t" style="left:225.60px;top:600.20px;font-size:13px;color:#303942;letter-spacing:0.026px;">Total Time</div>
<div class="t" style="left:346.30px;top:600.20px;font-size:13px;color:#303942;letter-spacing:0.079px;">Activity</div>
<svg style="left:206px;top:605.5px" width="8" height="5.5" viewBox="0 0 9 6"><path d="M0 0h9L4.5 6z" fill="#3a4248"/></svg>
<div class="r" style="left:0.00px;top:618.80px;width:1693.50px;height:20.00px;background:#f0f4f9;"></div>
<div class="t" style="left:134.43px;top:621.00px;font-size:13px;color:#303942;letter-spacing:-0.273px;">0.7 ms</div>
<div class="t" style="left:184.95px;top:621.00px;font-size:13px;color:#8b9399;letter-spacing:-0.279px;">0.1 %</div>
<div class="t" style="left:254.13px;top:621.00px;font-size:13px;color:#303942;letter-spacing:-0.273px;">5.2 ms</div>
<div class="t" style="left:304.95px;top:621.00px;font-size:13px;color:#8b9399;letter-spacing:-0.279px;">0.7 %</div>
<div class="r" style="left:367.20px;top:623.10px;width:12.00px;height:11.80px;background:#f8c516;border-radius:1px;box-shadow:inset 0 0 0 0.6px #eab80c;"></div>
<svg style="left:351.0px;top:625.0px" width="6" height="8.4" viewBox="0 0 6 9"><path d="M0 0v9L6 4.5z" fill="#333b41"/></svg>
<div class="t" style="left:385.40px;top:621.00px;font-size:13px;color:#303942;letter-spacing:-0.123px;">callbackTrampoline</div>
<span class="lk" style="left:1499.90px;top:621.00px;font-size:13px;letter-spacing:-0.118px;">node:internal/async_hooks:116:28</span>
<div class="r" style="left:0;top:638.8px;width:1693.5px;height:20px;background:linear-gradient(90deg,#afdffa,#c3e7fb 13%,#b6e2fa 22%,#bce5fb);"></div>
<div class="r" style="left:225.2px;top:641.4px;width:116.3px;height:16.2px;background:linear-gradient(90deg,#5ab9eb,#8bd0f3);"></div>
<div class="t" style="left:134.43px;top:641.00px;font-size:13px;color:#303942;letter-spacing:-0.273px;">0.6 ms</div>
<div class="t" style="left:184.95px;top:641.00px;font-size:13px;color:#303942;letter-spacing:-0.279px;">0.1 %</div>
<div class="t" style="left:241.20px;top:641.00px;font-size:13px;color:#303942;letter-spacing:-0.276px;">611.0 ms</div>
<div class="t" style="left:298.03px;top:641.00px;font-size:13px;color:#303942;letter-spacing:-0.283px;">81.8 %</div>
<div class="r" style="left:367.20px;top:643.10px;width:12.00px;height:11.80px;background:#f8c516;border-radius:1px;box-shadow:inset 0 0 0 0.6px #eab80c;"></div>
<svg style="left:349.2px;top:647.1px" width="8.6" height="6.4" viewBox="0 0 9 6.4"><path d="M0 0h9L4.5 6.4z" fill="#1f262b"/></svg>
<div class="t" style="left:385.40px;top:641.00px;font-size:13px;color:#303942;letter-spacing:-0.160px;">parserOnHeadersComplete</div>
<span class="lk" style="left:1541.60px;top:641.00px;font-size:13px;letter-spacing:-0.134px;">node:_http_common:72:33</span>
<div class="r" style="left:0.00px;top:658.80px;width:1693.50px;height:20.00px;background:#f0f4f9;"></div>
<div class="r" style="left:0.00px;top:660.00px;width:220.60px;height:17.80px;background:#fdf1c6;"></div>
<div class="r" style="left:0.00px;top:676.50px;width:220.60px;height:1.15px;background:#f5c93c;"></div>
<div class="r" style="left:225.20px;top:660.00px;width:116.30px;height:17.80px;background:#fdf1c6;"></div>
<div class="r" style="left:225.20px;top:676.50px;width:116.30px;height:1.15px;background:#f5c93c;"></div>
<div class="t" style="left:120.57px;top:661.00px;font-size:13px;color:#303942;letter-spacing:-0.281px;">608.4 ms</div>
<div class="t" style="left:178.03px;top:661.00px;font-size:13px;color:#8b9399;letter-spacing:-0.283px;">81.4 %</div>
<div class="t" style="left:240.27px;top:661.00px;font-size:13px;color:#303942;letter-spacing:-0.281px;">610.2 ms</div>
<div class="t" style="left:298.03px;top:661.00px;font-size:13px;color:#8b9399;letter-spacing:-0.283px;">81.6 %</div>
<div class="r" style="left:378.30px;top:663.10px;width:12.00px;height:11.80px;background:#f8c516;border-radius:1px;box-shadow:inset 0 0 0 0.6px #eab80c;"></div>
<svg style="left:360.3px;top:667.1px" width="8.6" height="6.4" viewBox="0 0 9 6.4"><path d="M0 0h9L4.5 6.4z" fill="#1f262b"/></svg>
<div class="t" style="left:396.50px;top:661.00px;font-size:13px;color:#303942;letter-spacing:-0.059px;">parserOnIncoming</div>
<span class="lk" style="left:1543.10px;top:661.00px;font-size:13px;letter-spacing:-0.212px;">node:_http_server:1027:26</span>
<div class="t" style="left:134.43px;top:681.00px;font-size:13px;color:#303942;letter-spacing:-0.273px;">0.3 ms</div>
<div class="t" style="left:184.95px;top:681.00px;font-size:13px;color:#8b9399;letter-spacing:-0.279px;">0.0 %</div>
<div class="t" style="left:254.13px;top:681.00px;font-size:13px;color:#303942;letter-spacing:-0.273px;">0.4 ms</div>
<div class="t" style="left:304.95px;top:681.00px;font-size:13px;color:#8b9399;letter-spacing:-0.279px;">0.1 %</div>
<div class="r" style="left:393.40px;top:683.10px;width:12.00px;height:11.80px;background:#f8c516;border-radius:1px;box-shadow:inset 0 0 0 0.6px #eab80c;"></div>
<svg style="left:377.2px;top:685.0px" width="6" height="8.4" viewBox="0 0 6 9"><path d="M0 0v9L6 4.5z" fill="#333b41"/></svg>
<div class="t" style="left:411.60px;top:681.00px;font-size:13px;color:#303942;letter-spacing:-0.344px;">assignSocket</div>
<span class="lk" style="left:1550.10px;top:681.00px;font-size:13px;letter-spacing:-0.211px;">node:_http_server:282:62</span>
<div class="r" style="left:0.00px;top:698.80px;width:1693.50px;height:20.00px;background:#f0f4f9;"></div>
<div class="t" style="left:134.43px;top:701.00px;font-size:13px;color:#303942;letter-spacing:-0.273px;">0.1 ms</div>
<div class="t" style="left:184.95px;top:701.00px;font-size:13px;color:#8b9399;letter-spacing:-0.279px;">0.0 %</div>
<div class="t" style="left:254.13px;top:701.00px;font-size:13px;color:#303942;letter-spacing:-0.273px;">0.1 ms</div>
<div class="t" style="left:304.95px;top:701.00px;font-size:13px;color:#8b9399;letter-spacing:-0.279px;">0.0 %</div>
<div class="r" style="left:393.40px;top:703.10px;width:12.00px;height:11.80px;background:#f8c516;border-radius:1px;box-shadow:inset 0 0 0 0.6px #eab80c;"></div>
<div class="t" style="left:411.60px;top:701.00px;font-size:13px;color:#303942;letter-spacing:-0.488px;">ServerResponse</div>
<span class="lk" style="left:1550.10px;top:701.00px;font-size:13px;letter-spacing:-0.211px;">node:_http_server:194:24</span>
<div class="r" style="left:0.00px;top:718.80px;width:1693.50px;height:20.00px;background:#dfe2e5;"></div>
<div class="t" style="left:116.42px;top:721.00px;font-size:13px;color:#303942;letter-spacing:-0.270px;">-607.3 ms</div>
<div class="t" style="left:173.88px;top:721.00px;font-size:13px;color:#8b9399;letter-spacing:-0.269px;">-81.3 %</div>
<div class="t" style="left:254.13px;top:721.00px;font-size:13px;color:#303942;letter-spacing:-0.273px;">1.2 ms</div>
<div class="t" style="left:304.95px;top:721.00px;font-size:13px;color:#8b9399;letter-spacing:-0.279px;">0.2 %</div>
<div class="r" style="left:393.40px;top:723.10px;width:12.00px;height:11.80px;background:#f8c516;border-radius:1px;box-shadow:inset 0 0 0 0.6px #eab80c;"></div>
<svg style="left:375.4px;top:727.1px" width="8.6" height="6.4" viewBox="0 0 9 6.4"><path d="M0 0h9L4.5 6.4z" fill="#1f262b"/></svg>
<div class="t" style="left:411.60px;top:721.00px;font-size:13px;color:#303942;letter-spacing:-0.124px;">get</div>
<span class="lk" style="left:1532.10px;top:721.00px;font-size:13px;letter-spacing:-0.077px;">node:_http_incoming:112:16</span>
<div class="r" style="left:0.00px;top:738.80px;width:1693.50px;height:20.00px;background:#f0f4f9;"></div>
<div class="t" style="left:134.43px;top:741.00px;font-size:13px;color:#303942;letter-spacing:-0.273px;">0.7 ms</div>
<div class="t" style="left:184.95px;top:741.00px;font-size:13px;color:#8b9399;letter-spacing:-0.279px;">0.1 %</div>
<div class="t" style="left:254.13px;top:741.00px;font-size:13px;color:#303942;letter-spacing:-0.273px;">0.7 ms</div>
<div class="t" style="left:304.95px;top:741.00px;font-size:13px;color:#8b9399;letter-spacing:-0.279px;">0.1 %</div>
<div class="r" style="left:408.00px;top:743.10px;width:12.00px;height:11.80px;background:#f8c516;border-radius:1px;box-shadow:inset 0 0 0 0.6px #eab80c;"></div>
<div class="t" style="left:426.20px;top:741.00px;font-size:13px;color:#303942;letter-spacing:-0.267px;">_addHeaderLine</div>
<span class="lk" style="left:1532.10px;top:741.00px;font-size:13px;letter-spacing:-0.115px;">node:_http_incoming:385:24</span>
<div class="r" style="left:225.20px;top:760.00px;width:116.30px;height:17.80px;background:#fdf1c6;"></div>
<div class="r" style="left:225.20px;top:776.50px;width:116.30px;height:1.15px;background:#f5c93c;"></div>
<div class="t" style="left:134.43px;top:761.00px;font-size:13px;color:#303942;letter-spacing:-0.273px;">0.0 ms</div>
<div class="t" style="left:184.95px;top:761.00px;font-size:13px;color:#8b9399;letter-spacing:-0.279px;">0.0 %</div>
<div class="t" style="left:240.27px;top:761.00px;font-size:13px;color:#303942;letter-spacing:-0.281px;">607.8 ms</div>
<div class="t" style="left:298.03px;top:761.00px;font-size:13px;color:#8b9399;letter-spacing:-0.283px;">81.3 %</div>
<div class="r" style="left:408.00px;top:763.10px;width:12.00px;height:11.80px;background:#f8c516;border-radius:1px;box-shadow:inset 0 0 0 0.6px #eab80c;"></div>
<svg style="left:390.0px;top:767.1px" width="8.6" height="6.4" viewBox="0 0 9 6.4"><path d="M0 0h9L4.5 6.4z" fill="#1f262b"/></svg>
<div class="t" style="left:426.20px;top:761.00px;font-size:13px;color:#303942;letter-spacing:0.285px;">emit</div>
<span class="lk" style="left:1583.30px;top:761.00px;font-size:13px;letter-spacing:-0.239px;">node:events:464:44</span>
<div class="r" style="left:0.00px;top:778.80px;width:1693.50px;height:20.00px;background:#f0f4f9;"></div>
<div class="r" style="left:225.20px;top:780.00px;width:116.30px;height:17.80px;background:#fdf1c6;"></div>
<div class="r" style="left:225.20px;top:796.50px;width:116.30px;height:1.15px;background:#f5c93c;"></div>
<div class="t" style="left:134.43px;top:781.00px;font-size:13px;color:#303942;letter-spacing:-0.273px;">0.5 ms</div>
<div class="t" style="left:184.95px;top:781.00px;font-size:13px;color:#8b9399;letter-spacing:-0.279px;">0.1 %</div>
<div class="t" style="left:240.27px;top:781.00px;font-size:13px;color:#303942;letter-spacing:-0.281px;">607.8 ms</div>
<div class="t" style="left:298.03px;top:781.00px;font-size:13px;color:#8b9399;letter-spacing:-0.283px;">81.3 %</div>
<div class="r" style="left:422.60px;top:783.10px;width:12.00px;height:11.80px;background:#f8c516;border-radius:1px;box-shadow:inset 0 0 0 0.6px #eab80c;"></div>
<svg style="left:404.6px;top:787.1px" width="8.6" height="6.4" viewBox="0 0 9 6.4"><path d="M0 0h9L4.5 6.4z" fill="#1f262b"/></svg>
<div class="t" style="left:440.80px;top:781.00px;font-size:13px;color:#303942;letter-spacing:-0.079px;">(anonymous)</div>
<span class="lk" style="left:1634.00px;top:781.00px;font-size:13px;letter-spacing:-0.306px;">test.js:8:29</span>
<div class="t" style="left:134.43px;top:801.00px;font-size:13px;color:#303942;letter-spacing:-0.273px;">1.0 ms</div>
<div class="t" style="left:184.95px;top:801.00px;font-size:13px;color:#8b9399;letter-spacing:-0.279px;">0.1 %</div>
<div class="t" style="left:254.13px;top:801.00px;font-size:13px;color:#303942;letter-spacing:-0.273px;">4.0 ms</div>
<div class="t" style="left:304.95px;top:801.00px;font-size:13px;color:#8b9399;letter-spacing:-0.279px;">0.5 %</div>
<div class="r" style="left:437.70px;top:803.10px;width:12.00px;height:11.80px;background:#f8c516;border-radius:1px;box-shadow:inset 0 0 0 0.6px #eab80c;"></div>
<svg style="left:421.5px;top:805.0px" width="6" height="8.4" viewBox="0 0 6 9"><path d="M0 0v9L6 4.5z" fill="#333b41"/></svg>
<div class="t" style="left:455.90px;top:801.00px;font-size:13px;color:#303942;letter-spacing:-0.197px;">end</div>
<span class="lk" style="left:1526.00px;top:801.00px;font-size:13px;letter-spacing:-0.073px;">node:_http_outgoing:1004:45</span>
<div class="r" style="left:0.00px;top:818.80px;width:1693.50px;height:20.00px;background:#f0f4f9;"></div>
<div class="t" style="left:134.43px;top:821.00px;font-size:13px;color:#303942;letter-spacing:-0.273px;">0.1 ms</div>
<div class="t" style="left:184.95px;top:821.00px;font-size:13px;color:#8b9399;letter-spacing:-0.279px;">0.0 %</div>
<div class="t" style="left:254.13px;top:821.00px;font-size:13px;color:#303942;letter-spacing:-0.273px;">0.2 ms</div>
<div class="t" style="left:304.95px;top:821.00px;font-size:13px;color:#8b9399;letter-spacing:-0.279px;">0.0 %</div>
<div class="r" style="left:437.70px;top:823.10px;width:12.00px;height:11.80px;background:#f8c516;border-radius:1px;box-shadow:inset 0 0 0 0.6px #eab80c;"></div>
<svg style="left:421.5px;top:825.0px" width="6" height="8.4" viewBox="0 0 6 9"><path d="M0 0v9L6 4.5z" fill="#333b41"/></svg>
<div class="t" style="left:455.90px;top:821.00px;font-size:13px;color:#303942;letter-spacing:-0.220px;">setHeader</div>
<span class="lk" style="left:1533.10px;top:821.00px;font-size:13px;letter-spacing:-0.070px;">node:_http_outgoing:646:57</span>
<div class="r" style="left:225.20px;top:840.00px;width:116.30px;height:17.80px;background:#fdf1c6;"></div>
<div class="r" style="left:225.20px;top:856.50px;width:116.30px;height:1.15px;background:#f5c93c;"></div>
<div class="t" style="left:134.43px;top:841.00px;font-size:13px;color:#303942;letter-spacing:-0.273px;">0.0 ms</div>
<div class="t" style="left:184.95px;top:841.00px;font-size:13px;color:#8b9399;letter-spacing:-0.279px;">0.0 %</div>
<div class="t" style="left:240.27px;top:841.00px;font-size:13px;color:#303942;letter-spacing:-0.281px;">603.2 ms</div>
<div class="t" style="left:298.03px;top:841.00px;font-size:13px;color:#8b9399;letter-spacing:-0.283px;">80.7 %</div>
<div class="r" style="left:437.70px;top:843.10px;width:12.00px;height:11.80px;background:#f8c516;border-radius:1px;box-shadow:inset 0 0 0 0.6px #eab80c;"></div>
<svg style="left:421.5px;top:845.0px" width="6" height="8.4" viewBox="0 0 6 9"><path d="M0 0v9L6 4.5z" fill="#333b41"/></svg>
<div class="t" style="left:455.90px;top:841.00px;font-size:13px;color:#303942;letter-spacing:-0.351px;">bigTask1</div>
<span class="lk" style="left:1626.90px;top:841.00px;font-size:13px;letter-spacing:-0.292px;">test.js:24:18</span>
<div class="r" style="left:0.00px;top:858.80px;width:1693.50px;height:20.00px;background:#f0f4f9;"></div>
<div class="t" style="left:134.43px;top:861.00px;font-size:13px;color:#303942;letter-spacing:-0.273px;">0.0 ms</div>
<div class="t" style="left:184.95px;top:861.00px;font-size:13px;color:#8b9399;letter-spacing:-0.279px;">0.0 %</div>
<div class="t" style="left:254.13px;top:861.00px;font-size:13px;color:#303942;letter-spacing:-0.273px;">0.1 ms</div>
<div class="t" style="left:304.95px;top:861.00px;font-size:13px;color:#8b9399;letter-spacing:-0.279px;">0.0 %</div>
<div class="r" style="left:378.30px;top:863.10px;width:12.00px;height:11.80px;background:#f8c516;border-radius:1px;box-shadow:inset 0 0 0 0.6px #eab80c;"></div>
<svg style="left:362.1px;top:865.0px" width="6" height="8.4" viewBox="0 0 6 9"><path d="M0 0v9L6 4.5z" fill="#333b41"/></svg>
<div class="t" style="left:396.50px;top:861.00px;font-size:13px;color:#303942;letter-spacing:-0.073px;">IncomingMessage</div>
<span class="lk" style="left:1539.10px;top:861.00px;font-size:13px;letter-spacing:-0.110px;">node:_http_incoming:53:25</span>
<div class="t" style="left:134.43px;top:881.00px;font-size:13px;color:#303942;letter-spacing:-0.273px;">0.2 ms</div>
<div class="t" style="left:184.95px;top:881.00px;font-size:13px;color:#8b9399;letter-spacing:-0.279px;">0.0 %</div>
<div class="t" style="left:254.13px;top:881.00px;font-size:13px;color:#303942;letter-spacing:-0.273px;">0.2 ms</div>
<div class="t" style="left:304.95px;top:881.00px;font-size:13px;color:#8b9399;letter-spacing:-0.279px;">0.0 %</div>
<div class="r" style="left:367.20px;top:883.10px;width:12.00px;height:11.80px;background:#f8c516;border-radius:1px;box-shadow:inset 0 0 0 0.6px #eab80c;"></div>
<div class="t" style="left:385.40px;top:881.00px;font-size:13px;color:#303942;letter-spacing:0.132px;">emitInitNative</div>
<span class="lk" style="left:1499.90px;top:881.00px;font-size:13px;letter-spacing:-0.148px;">node:internal/async_hooks:197:24</span>
<div class="r" style="left:0.00px;top:898.80px;width:1693.50px;height:20.00px;background:#f0f4f9;"></div>
<div class="t" style="left:134.43px;top:901.00px;font-size:13px;color:#303942;letter-spacing:-0.273px;">0.1 ms</div>
<div class="t" style="left:184.95px;top:901.00px;font-size:13px;color:#8b9399;letter-spacing:-0.279px;">0.0 %</div>
<div class="t" style="left:254.13px;top:901.00px;font-size:13px;color:#303942;letter-spacing:-0.273px;">0.1 ms</div>
<div class="t" style="left:304.95px;top:901.00px;font-size:13px;color:#8b9399;letter-spacing:-0.279px;">0.0 %</div>
<div class="r" style="left:367.20px;top:903.10px;width:12.00px;height:11.80px;background:#f8c516;border-radius:1px;box-shadow:inset 0 0 0 0.6px #eab80c;"></div>
<div class="t" style="left:385.40px;top:901.00px;font-size:13px;color:#303942;letter-spacing:0.124px;">emitHook</div>
<span class="lk" style="left:1499.90px;top:901.00px;font-size:13px;letter-spacing:-0.148px;">node:internal/async_hooks:223:18</span>
<div class="t" style="left:134.43px;top:921.00px;font-size:13px;color:#303942;letter-spacing:-0.273px;">0.0 ms</div>
<div class="t" style="left:184.95px;top:921.00px;font-size:13px;color:#8b9399;letter-spacing:-0.279px;">0.0 %</div>
<div class="t" style="left:254.13px;top:921.00px;font-size:13px;color:#303942;letter-spacing:-0.273px;">0.3 ms</div>
<div class="t" style="left:304.95px;top:921.00px;font-size:13px;color:#8b9399;letter-spacing:-0.279px;">0.0 %</div>
<div class="r" style="left:367.20px;top:923.10px;width:12.00px;height:11.80px;background:#f8c516;border-radius:1px;box-shadow:inset 0 0 0 0.6px #eab80c;"></div>
<svg style="left:351.0px;top:925.0px" width="6" height="8.4" viewBox="0 0 6 9"><path d="M0 0v9L6 4.5z" fill="#333b41"/></svg>
<div class="t" style="left:385.40px;top:921.00px;font-size:13px;color:#303942;letter-spacing:-0.173px;">parserOnMessageComplete</div>
<span class="lk" style="left:1535.10px;top:921.00px;font-size:13px;letter-spacing:-0.158px;">node:_http_common:137:33</span>
<div class="r" style="left:0.00px;top:617.80px;width:1694.60px;height:1.00px;background:#a9d7ee;"></div>
<div class="r" style="left:221.00px;top:598.20px;width:1.00px;height:340.00px;background:#cbe6f5;"></div>
<div class="r" style="left:341.40px;top:598.20px;width:1.00px;height:340.00px;background:#cbe6f5;"></div>
<div class="r" style="left:1694.60px;top:598.20px;width:12.40px;height:340.00px;background:#f1f2f3;"></div>
<div class="r" style="left:1696.00px;top:662.00px;width:11.00px;height:256.00px;background:#c1c3c5;"></div>
<svg style="left:1697.4px;top:604.5px" width="8" height="5" viewBox="0 0 8 5"><path d="M0 5h8L4 0z" fill="#55595d"/></svg>
<svg style="left:1697.4px;top:925.5px" width="8" height="5" viewBox="0 0 8 5"><path d="M0 0h8L4 5z" fill="#55595d"/></svg>
<div class="r" style="left:220.4px;top:637.8px;width:326.4px;height:218.2px;border:3px solid #e2101c;"></div>
<svg style="left:0;top:0" width="1707" height="935" viewBox="0 0 1707 935"><path d="M1307.6 847.4L1606 849.6" stroke="#e8131d" stroke-width="2.3" fill="none"/><path d="M1603.6 843.6L1620 849.9L1603.6 856.2z" fill="#e8131d"/></svg>
<div class="t" style="left:1329.6px;top:878px;height:34px;line-height:34px;font-size:24.5px;color:rgba(255,255,255,0.96);letter-spacing:0.12px;text-shadow:1px 1px 0.6px rgba(50,50,50,0.92),1.6px 1.6px 1.2px rgba(60,60,60,0.5),0 0 1px rgba(70,70,70,0.55);">掘金技术社区 <span style="letter-spacing:2.25px">@OpenTiny</span>社区</div>
</div>
</body></html>
